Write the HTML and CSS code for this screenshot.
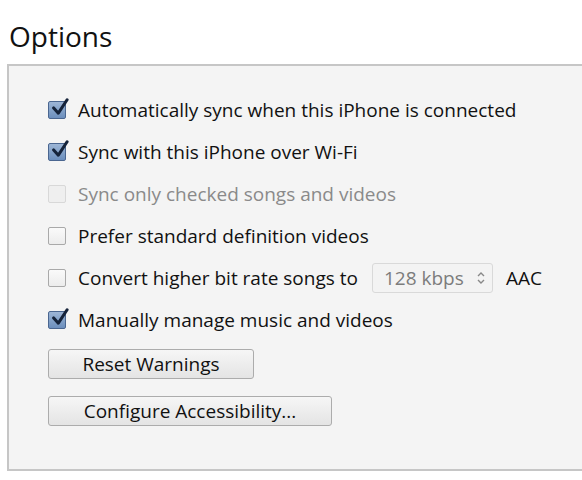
FILE: index.html
```html
<!DOCTYPE html>
<html>
<head>
<meta charset="utf-8">
<link rel="stylesheet" href="styles.css">
</head>
<body>
<h1 class="title">Options</h1>
<div class="panel">
  <div class="row">
    <span class="cb checked"><svg viewBox="0 0 18 18"><path d="M4 8.5 L8 13 L15.5 1.5" fill="none" stroke="#15233a" stroke-width="2.6" stroke-linecap="round" stroke-linejoin="round"/></svg></span>
    <span class="label">Automatically sync when this iPhone is connected</span>
  </div>
  <div class="row">
    <span class="cb checked"><svg viewBox="0 0 18 18"><path d="M4 8.5 L8 13 L15.5 1.5" fill="none" stroke="#15233a" stroke-width="2.6" stroke-linecap="round" stroke-linejoin="round"/></svg></span>
    <span class="label">Sync with this iPhone over Wi-Fi</span>
  </div>
  <div class="row disabled">
    <span class="cb"></span>
    <span class="label">Sync only checked songs and videos</span>
  </div>
  <div class="row">
    <span class="cb"></span>
    <span class="label">Prefer standard definition videos</span>
  </div>
  <div class="row">
    <span class="cb"></span>
    <span class="label">Convert higher bit rate songs to</span>
    <span class="select">128 kbps<svg class="chev" viewBox="0 0 10 14"><path d="M2 5 L5 2 L8 5 M2 9 L5 12 L8 9" fill="none" stroke="#888" stroke-width="1.4"/></svg></span>
    <span class="label aac">AAC</span>
  </div>
  <div class="row">
    <span class="cb checked"><svg viewBox="0 0 18 18"><path d="M4 8.5 L8 13 L15.5 1.5" fill="none" stroke="#15233a" stroke-width="2.6" stroke-linecap="round" stroke-linejoin="round"/></svg></span>
    <span class="label">Manually manage music and videos</span>
  </div>
  <div class="buttons">
    <button class="btn btn-reset">Reset Warnings</button>
    <button class="btn btn-config">Configure Accessibility...</button>
  </div>
</div>
</body>
</html>
```
FILE: styles.css
```css
html, body {
  margin: 0;
  padding: 0;
  background: #ffffff;
  font-family: "Open Sans", "Noto Sans", sans-serif;
  color: #111;
  overflow: hidden;
}
.title {
  margin: 0;
  padding: 16px 0 0 9px;
  height: 48px;
  font-size: 28px;
  font-weight: 400;
  line-height: 40px;
}
.panel {
  margin-left: 7px;
  width: 600px;
  height: 407px;
  border: 2px solid #c6c6c6;
  border-right: none;
  background: #f4f4f4;
  padding: 23px 0 0 39px;
  box-sizing: border-box;
  display: flex;
  flex-direction: column;
}
.row {
  display: flex;
  align-items: center;
  height: 42px;
  font-size: 19px;
}
.cb {
  width: 18px;
  height: 18px;
  box-sizing: border-box;
  border: 1px solid #a9a9a9;
  border-radius: 2px;
  background: linear-gradient(#fafafa, #ececec);
  margin-right: 12px;
  position: relative;
  flex: none;
}
.cb.checked {
  background: linear-gradient(#9db6d6, #6c8fbd);
  border-color: #4a6690;
}
.cb svg {
  position: absolute;
  left: 0;
  top: -4px;
  width: 21px;
  height: 21px;
}
.disabled .cb {
  border-color: #d8d8d8;
  background: #efefef;
}
.disabled .label {
  color: #8a8a8a;
}
.select {
  margin-left: 14px;
  width: 121px;
  height: 30px;
  box-sizing: border-box;
  border: 1px solid #d9d9d9;
  border-radius: 3px;
  background: #f3f3f3;
  color: #7c7c7c;
  display: flex;
  align-items: center;
  justify-content: space-between;
  padding: 0 6px 0 11px;
}
.chev {
  width: 10px;
  height: 14px;
}
.aac {
  margin-left: 13px;
}
.buttons {
  display: flex;
  flex-direction: column;
  align-items: flex-start;
  gap: 17px;
  margin-top: 8px;
}
.btn {
  font-family: inherit;
  font-size: 19px;
  color: #111;
  height: 30px;
  box-sizing: border-box;
  border: 1px solid #acacac;
  border-radius: 3px;
  background: linear-gradient(#f6f6f6, #e4e4e4);
  padding: 0;
  line-height: 26px;
}
.btn-reset { width: 206px; }
.btn-config { width: 284px; }
```
